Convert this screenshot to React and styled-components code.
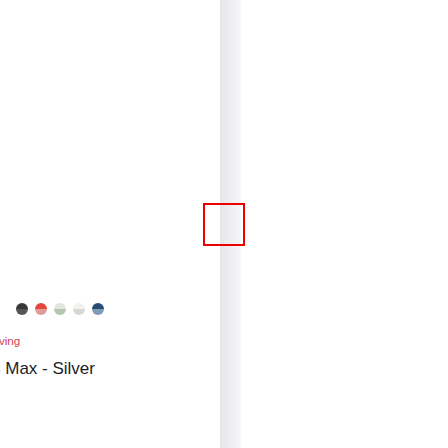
import React from 'react';
import styled, { createGlobalStyle } from 'styled-components';

const GlobalStyle = createGlobalStyle`
    html, body {
        margin: 0;
        padding: 0;
        background: #ffffff;
        font-family: "Liberation Sans", Arial, sans-serif;
    }
`;

const Page = styled.div`
    position: relative;
    display: flex;
    width: 448px;
    height: 448px;
    overflow: hidden;
    background: #ffffff;
`;

const Tile = styled.div`
    width: 220px;
    flex-shrink: 0;
    display: flex;
    flex-direction: column;
    padding-top: 303px;
    box-sizing: border-box;
`;

const Swatches = styled.div`
    display: flex;
    gap: 7px;
    padding-left: 16px;
`;

const Swatch = styled.span`
    width: 12px;
    height: 12px;
    border-radius: 50%;
    background: linear-gradient(
        to bottom,
        ${props => props.top} 0%,
        ${props => props.top} 50%,
        ${props => props.bottom} 50%,
        ${props => props.bottom} 100%
    );
`;

const Caption = styled.div`
    margin-left: -59px;
    margin-top: 18px;
    display: flex;
    flex-direction: column;
    gap: 9px;
    white-space: nowrap;
`;

const Badge = styled.span`
    font-size: 11.6px;
    line-height: 16px;
    color: #cc4553;
`;

const Name = styled.span`
    font-size: 17px;
    line-height: 22px;
    color: #1d1d1f;
`;

const Divider = styled.div`
    width: 21px;
    flex-shrink: 0;
    height: 100%;
    background: linear-gradient(to right, #e6e6e9 0%, #eeeef1 45%, #f3f3f5 85%, #f8f8f9 100%);
`;

const Highlight = styled.div`
    position: absolute;
    left: 203px;
    top: 203px;
    width: 42px;
    height: 43px;
    box-sizing: border-box;
    border: 2px solid #ee0000;
`;

const colors = [
    { top: '#383838', bottom: '#555555' },
    { top: '#e5473f', bottom: '#e09c98' },
    { top: '#dfe6dc', bottom: '#b5c5b0' },
    { top: '#f1f1ef', bottom: '#d5d6d6' },
    { top: '#284d72', bottom: '#7e9ab5' },
];

function App() {
    return (
        <Page>
            <GlobalStyle />
            <Tile>
                <Swatches>
                    {colors.map((c, i) => (
                        <Swatch key={i} top={c.top} bottom={c.bottom} />
                    ))}
                </Swatches>
                <Caption>
                    <Badge>Free Engraving</Badge>
                    <Name>AirPods Max - Silver</Name>
                </Caption>
            </Tile>
            <Divider />
            <Highlight />
        </Page>
    );
}

export default App;
